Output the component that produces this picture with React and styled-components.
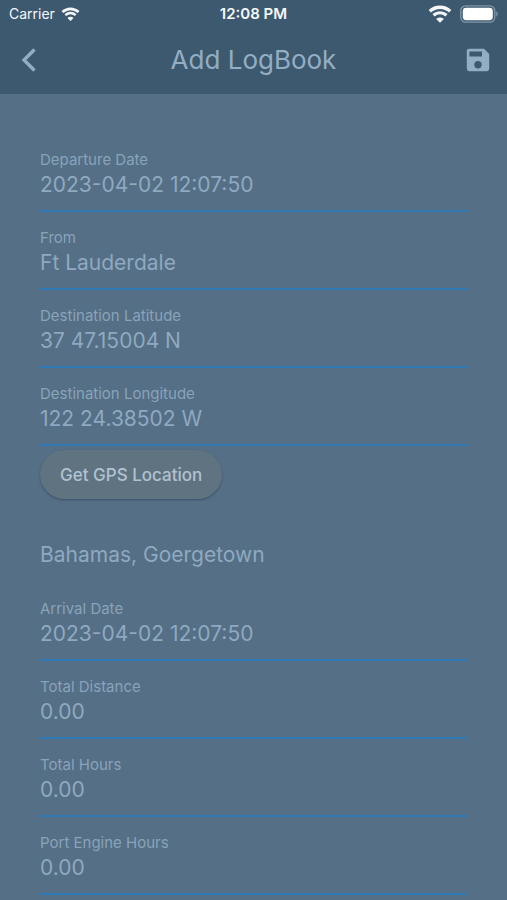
import React, { useState } from "react";
import styled, { createGlobalStyle } from "styled-components";

const GlobalStyle = createGlobalStyle`
  * {
    box-sizing: border-box;
  }
  body {
    margin: 0;
    background: #556f86;
    font-family: Inter, "Liberation Sans", sans-serif;
  }
`;

const Page = styled.div`
  display: flex;
  flex-direction: column;
  min-height: 100vh;
  background: #556f86;
`;

const Header = styled.header`
  background: #3d596f;
  padding-bottom: 10px;
`;

const StatusBar = styled.div`
  display: grid;
  grid-template-columns: 1fr auto 1fr;
  align-items: center;
  height: 28px;
  padding: 0 9px;
  color: #f4f8fb;
  font-size: 14px;
  line-height: 20px;
`;

const StatusGroup = styled.div`
  display: flex;
  align-items: center;
  justify-content: ${(props) => (props.$end ? "flex-end" : "flex-start")};
  gap: ${(props) => (props.$end ? "8px" : "6px")};
`;

const Clock = styled.span`
  font-size: 15px;
  font-weight: 600;
`;

const TitleBar = styled.div`
  display: grid;
  grid-template-columns: 58px 1fr 58px;
  align-items: center;
  height: 56px;
  padding-top: 8px;
`;

const Title = styled.h1`
  margin: 0;
  color: #93aec3;
  font-size: 26px;
  font-weight: 400;
  line-height: 32px;
  text-align: center;
`;

const IconButton = styled.button`
  display: flex;
  align-items: center;
  justify-content: center;
  height: 48px;
  padding: 0;
  border: none;
  background: none;
  color: #93aec3;
  cursor: pointer;
`;

const Form = styled.form`
  display: flex;
  flex-direction: column;
  padding: 40px 40px 0;
`;

const Field = styled.div`
  display: flex;
  flex-direction: column;
  gap: 5px;
  padding: 18px 0 13px;
  border-bottom: 2px solid #2f7ab5;
`;

const Label = styled.label`
  color: #89a3b9;
  font-size: 15px;
  line-height: 16px;
`;

const Input = styled.input`
  width: 100%;
  height: 24px;
  padding: 0;
  border: none;
  outline: none;
  background: none;
  color: #8fa9c0;
  font-family: inherit;
  font-size: 21px;
  line-height: 24px;
`;

const GpsButton = styled.button`
  align-self: flex-start;
  height: 49px;
  margin-top: 4px;
  padding: 0 20px;
  border: none;
  border-radius: 25px;
  background: #607380;
  box-shadow: 0 1px 2px rgba(40, 60, 85, 0.6);
  color: #b0c2d2;
  font-family: inherit;
  font-size: 17px;
  font-weight: 500;
  line-height: 24px;
  cursor: pointer;
`;

const Destination = styled.div`
  display: flex;
  padding: 44px 0 16px;
`;

const WifiIcon = ({ width }) => (
  <svg width={width} viewBox="0 0 24 18" fill="none" aria-hidden="true">
    <path d="M1.8 6.3C7.8 0.9 16.2 0.9 22.2 6.3" stroke="currentColor" strokeWidth="3.4" />
    <path d="M5.5 10.3C9.4 6.9 14.6 6.9 18.5 10.3" stroke="currentColor" strokeWidth="3.2" />
    <path d="M12 17.8 8.2 13.9C10.3 11.9 13.7 11.9 15.8 13.9Z" fill="currentColor" />
  </svg>
);

const BatteryIcon = () => (
  <svg width="38" height="18" viewBox="0 0 38 18" fill="none" aria-hidden="true">
    <rect x="0.8" y="0.8" width="34" height="16.4" rx="5" stroke="#8397a7" strokeWidth="1.3" />
    <rect x="2.8" y="2.8" width="30" height="12.4" rx="3.4" fill="#fff" />
    <path d="M36.3 6.3C38.2 7 38.2 11 36.3 11.7Z" fill="#8397a7" />
  </svg>
);

const BackIcon = () => (
  <svg width="16" height="26" viewBox="0 0 16 26" fill="none" aria-hidden="true">
    <path d="M13.5 2.5 3 13 13.5 23.5" stroke="currentColor" strokeWidth="3.4" />
  </svg>
);

const SaveIcon = () => (
  <svg width="24" height="24" viewBox="0 0 24 24" aria-hidden="true">
    <path
      fill="currentColor"
      fillRule="evenodd"
      d="M3.4 0.8H18L23.2 6V20.8Q23.2 23.2 20.8 23.2H3.2Q0.8 23.2 0.8 20.8V3.2Q0.8 0.8 3.4 0.8ZM3.4 3.5V8.4H16V3.5ZM12 13a3.7 3.7 0 1 0 0 7.4 3.7 3.7 0 0 0 0-7.4Z"
    />
  </svg>
);

const departureFields = [
  { name: "departureDate", label: "Departure Date" },
  { name: "from", label: "From" },
  { name: "latitude", label: "Destination Latitude" },
  { name: "longitude", label: "Destination Longitude" },
];

const arrivalFields = [
  { name: "arrivalDate", label: "Arrival Date" },
  { name: "distance", label: "Total Distance" },
  { name: "hours", label: "Total Hours" },
  { name: "portHours", label: "Port Engine Hours" },
];

const initialLog = {
  departureDate: "2023-04-02 12:07:50",
  from: "Ft Lauderdale",
  latitude: "37 47.15004 N",
  longitude: "122 24.38502 W",
  destination: "Bahamas, Goergetown",
  arrivalDate: "2023-04-02 12:07:50",
  distance: "0.00",
  hours: "0.00",
  portHours: "0.00",
};

const App = () => {
  const [log, setLog] = useState(initialLog);

  const onChange = (e) => {
    setLog({ ...log, [e.target.name]: e.target.value });
  };

  const renderField = ({ name, label }) => (
    <Field key={name}>
      <Label htmlFor={name}>{label}</Label>
      <Input id={name} name={name} value={log[name]} onChange={onChange} />
    </Field>
  );

  return (
    <Page>
      <GlobalStyle />
      <Header>
        <StatusBar>
          <StatusGroup>
            Carrier
            <WifiIcon width="19" />
          </StatusGroup>
          <Clock>12:08 PM</Clock>
          <StatusGroup $end>
            <WifiIcon width="24" />
            <BatteryIcon />
          </StatusGroup>
        </StatusBar>
        <TitleBar>
          <IconButton type="button" aria-label="Back">
            <BackIcon />
          </IconButton>
          <Title>Add LogBook</Title>
          <IconButton type="submit" form="logbook" aria-label="Save">
            <SaveIcon />
          </IconButton>
        </TitleBar>
      </Header>
      <Form id="logbook" onSubmit={(e) => e.preventDefault()}>
        {departureFields.map(renderField)}
        <GpsButton type="button">Get GPS Location</GpsButton>
        <Destination>
          <Input
            name="destination"
            aria-label="Destination"
            value={log.destination}
            onChange={onChange}
          />
        </Destination>
        {arrivalFields.map(renderField)}
      </Form>
    </Page>
  );
};

export default App;
